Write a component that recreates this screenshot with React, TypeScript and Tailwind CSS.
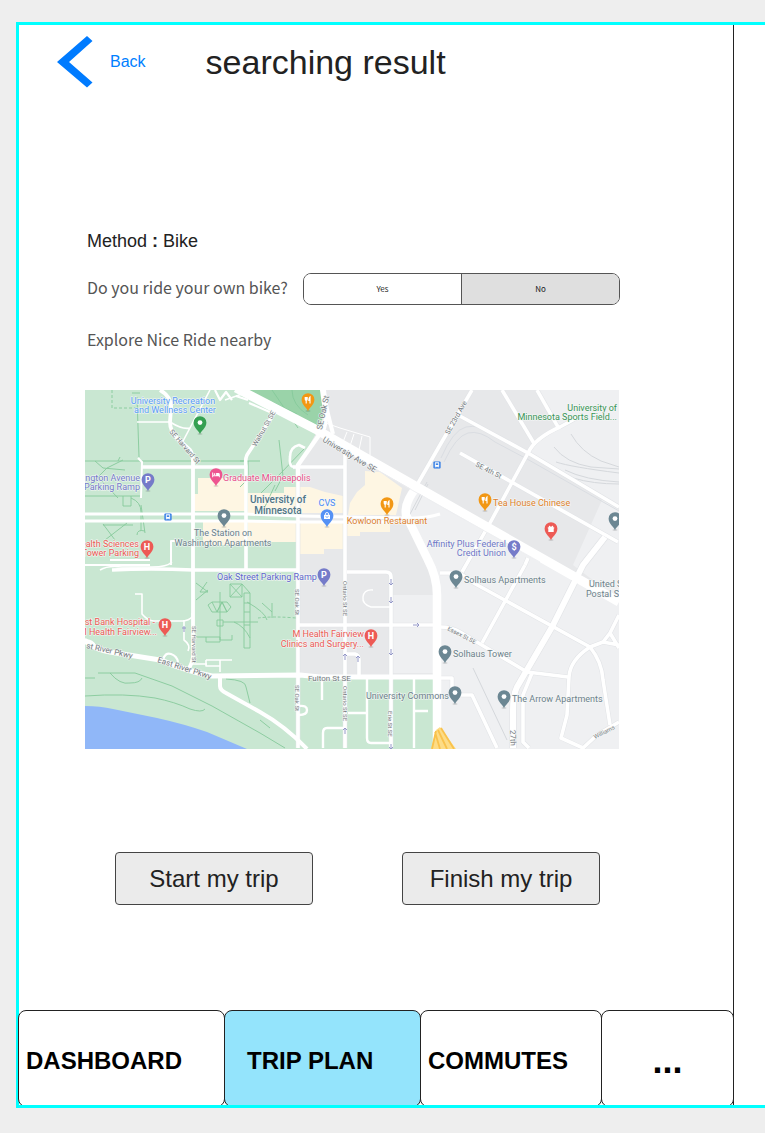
import React, { useState } from "react";

type LabelProps = {
  x: number;
  y: number;
  color: string;
  anchor?: "start" | "middle" | "end";
  size?: number;
  rotate?: number;
  weight?: number;
  halo?: string;
  children: string;
};

function Label({ x, y, color, anchor = "start", size = 9, rotate = 0, weight = 400, halo = "#f6f8f7", children }: LabelProps) {
  return (
    <text
      x={x}
      y={y}
      fill={color}
      fontSize={size}
      fontWeight={weight}
      textAnchor={anchor}
      stroke={halo}
      strokeWidth={1.4}
      strokeOpacity={0.75}
      strokeLinejoin="round"
      paintOrder="stroke"
      transform={rotate ? `rotate(${rotate} ${x} ${y})` : undefined}
    >
      {children}
    </text>
  );
}

type PinKind = "dot" | "letter" | "food" | "bag" | "bed" | "gift";

function Pin({ x, y, color, kind = "dot", letter }: { x: number; y: number; color: string; kind?: PinKind; letter?: string }) {
  return (
    <g transform={`translate(${x} ${y})`}>
      <ellipse cx="0" cy="11" rx="2.6" ry="1" fill="#000" opacity="0.12" />
      <path d="M0 11.3C-.9 7.6-6.4 5.6-6.4-.4a6.4 6.4 0 1 1 12.8 0C6.4 5.6 .9 7.6 0 11.3Z" fill={color} />
      {kind === "dot" && <circle cy="-.4" r="2.4" fill="#fff" />}
      {kind === "letter" && (
        <text y="3" fill="#fff" fontSize="9" fontWeight="700" textAnchor="middle">
          {letter}
        </text>
      )}
      {kind === "food" && (
        <path d="M-2.8-3v2.2q0 1 1 1.2V3.4M-.8-3v2.2q0 1-1 1.2M-1.8-3v3M2 3.4V-3Q.8-2 .8.4H2" fill="none" stroke="#fff" strokeWidth="1.1" />
      )}
      {kind === "bag" && (
        <>
          <path d="M-3-1.2h6v4.2h-6z" fill="#fff" />
          <path d="M-1.6-1v-1q0-1.5 1.6-1.5t1.6 1.5v1" fill="none" stroke="#fff" strokeWidth="0.9" />
          <path d="M-1.5.4q1.5 2 3 0" fill="none" stroke={color} strokeWidth="0.8" />
        </>
      )}
      {kind === "bed" && (
        <path d="M-3.8-2.4h.9v2.7h3v-2.2H2.4q1.4 0 1.4 1.4v2.8h-.9V1.2h-5.8v1.1h-.9zM-1.5-1.8a.9.9 0 1 1 0 1.8.9.9 0 0 1 0-1.8" fill="#fff" />
      )}
      {kind === "gift" && <path d="M-3.2-1.8h1.4L-2.4-3l1.2-.3L0-2l1.2-1.3L2.4-3l-.6 1.2h1.4V-.4h-.5v3.5h-5.4V-.4h-.5z" fill="#fff" />}
    </g>
  );
}

function Transit({ x, y }: { x: number; y: number }) {
  return (
    <g transform={`translate(${x} ${y})`}>
      <rect x="-3.6" y="-3.6" width="7.2" height="7.2" rx="1" fill="#2b78e4" />
      <path d="M-1.9-2.4h3.8v4.2h-3.8zM-1.4 1.8l-.6.9M1.4 1.8l.6.9" fill="#fff" stroke="#fff" strokeWidth="0.5" />
      <path d="M-1.2-1.6h2.4v1.5h-2.4z" fill="#2b78e4" />
    </g>
  );
}

const streets = [
  "M472 390L440 445 417 485",
  "M502 390L535 445",
  "M537 390L558 427",
  "M458 415L528 453 619 507",
  "M582 415L560 427Q535 438 528 453L490 523 462 572",
  "M460 453L618 542",
  "M525 565L482 643",
  "M528 558L525 565",
  "M440 573H458Q464 575 470 581L590 647",
  "M440 627Q452 627 460 632L527 672 568 677",
  "M590 647Q570 660 569 677L567 715 561 738 583 748 597 735 619 722",
  "M590 647Q602 662 603 680L610 725",
  "M590 647L603 642 610 633 619 615M603 642L619 645M610 633L619 648",
  "M298 465V748",
  "M345 452V748",
  "M293 467H345",
  "M298 625H433",
  "M347 572H386Q391 572 391 577V748",
  "M345 654H355Q359 655 359 660V675",
  "M532 673L523 695V742L529 748",
  "M440 678H452V695H472L497 748",
];

const greenPaths = [
  "M132 393h8M137 397l2 60",
  "M85 461H260M85 496H141M118 461l2-4M95 461l8 7 22 2M85 490l22-22 16-8M98 477l20 21",
  "M123 496v10h8v-10M131 498q10 4 10 14v19M103 524l12 16M103 525h30M105 540l22-17M145 531q-8-2-8 4M141 505l4 28",
  "M85 678h10M98 673h37l37 13 40 20 48 27 25 15M110 673q10 12 20 10 10 0 12-5",
  "M85 696q40-3 70 2 20 4 35 11 12 4 15 0M226 679q20 1 20 8l4 16",
  "M196 583l12 9h-8l7-10M196 600l12-10M208 605l4-3h15l4 5-4 5h-15zM212 602l5 10 5-10 5 10M217 612l5-10 5 10M220 592v48M206 637h14v5h-14zM196 637h10M220 640h12v-5M217 620h6v6h-6zM223 622h35",
  "M230 584h12v13h-12zM230 584l12 13M242 584l-12 13M242 584l8 9M244 593h6v55h-6zM244 603h6M244 612h6M244 625h6M234 622q10 4 16 16M247 602q18 10 20 18",
  "M272 390l26 38M292 390q0 15 16 25M272 402l25 12M305 448l-26 27-18 18M279 440l4 36-8 15M275 485l-12 26M240 461h8v18l-8 8",
  "M262 603l10 9v-9M272 612v6M260 720l10 8",
];

const lanes = [
  { d: "M137 422H170Q183 430 190 428M210 390L182 443M242 394L225 400M100 570q8-5 22-3h30q15 0 20-5", w: 1.6 },
  { d: "M135 594h7v20q6 7 12 7h30M184 621q10-2 8-8M184 620v20q7 5 4 11M192 664h15M206 660h26M206 660v6h14v-6M220 660v12", w: 1.6 },
  { d: "M163 660q2-8 8-6t7 8M85 640q8 0 10 6M236 396L248 400M249 403L272 413M215 390l5 10 6-8 6 8", w: 2.2 },
  { d: "M138 458l4 4-1 36M85 565h65M171 565v-24h8M110 560h40", w: 2 },
  { d: "M322 678v22M367 678v60q0 5 4 5h20M348 713h19M345 728h-18q-4 0-4 5v15M414 678v70M414 711h14M299 715q8 0 8-5t-8-4", w: 2.4 },
  { d: "M391 607h-20q-9-3-8-10 1-8 10-7", w: 1.4 },
  { d: "M320 421l20 7 30 9v18M347 432l-4 10M354 434l-4 12M362 436l-3 14", w: 1 },
];

const streetName = "#74797e";

function CampusMap() {
  return (
    <svg viewBox="85 390 534 359" className="block w-full" role="img" aria-label="Map of Nice Ride stations nearby" fontFamily="Roboto, sans-serif">
      <rect x="85" y="390" width="534" height="359" fill="#e7e8ea" />
      <path d="M85 390H236L318 430 298 466V677H437V749H85Z" fill="#c9e7d2" />
      <path d="M247 390H322Q327 407 320 427Z" fill="#9ad3a9" />
      <path d="M298 466L318 430 345 446V515H298Z" fill="#e7e8ea" />
      <path d="M538 390L560 428 537 443 528 455 619 507V390ZM602 500L573 565 619 600V510ZM413 485L619 600V749H437V590L405 512ZM393 595H435V673H393Z" fill="#eff0f2" />
      <path d="M198 478H246V511H194V494H198ZM203 522H246V545H203ZM248 493H284V487H310L325 492 343 496V513H248ZM248 522H297V542H248ZM300 523H343V549H324V554H300ZM348 515L350 503 357 492 365 485V471L380 472 402 488 396 515ZM347 520H390V532H360V536H347Z" fill="#fef6e3" />
      <path d="M85 706Q100 706 113 709L157 718Q184 724 207 732L247 749H85Z" fill="#90b7f8" />

      <g fill="none" stroke="#86c99b" strokeWidth="0.9">
        {greenPaths.map((d) => (
          <path key={d} d={d} />
        ))}
        <path d="M112 390v18h26M258 618q15-2 38 0" strokeDasharray="3 2" />
      </g>

      <g fill="none" stroke="#d5d8dc" strokeWidth="1">
        <path d="M554 447q12 16 37 20l28 2M571 434q10 18 30 27l18 6M556 462q15 5 63 11M565 470q20 10 54 12M573 478q20 6 46 6" />
        <path d="M441 458q12-28 25-31t28 7l30 16 95 56M444 462q12-26 24-29t27 9l32 17 92 52" stroke="#dadde2" />
        <path d="M473 668L507 740M427 482l-18 34M428 484l-13 26" />
      </g>

      <g fill="none" stroke="#e1e3e6" strokeWidth="4.6" strokeLinejoin="round">
        {streets.map((d) => (
          <path key={d} d={d} />
        ))}
        <path d="M605 537L583 565 552 627 517 687Q513 695 513 710V748" strokeWidth="7.2" />
      </g>

      <g fill="none" stroke="#fff" strokeLinejoin="round">
        {lanes.map((road) => (
          <path key={road.d} d={road.d} strokeWidth={road.w} />
        ))}
        <g strokeWidth="3.6">
          {streets.map((d) => (
            <path key={d} d={d} />
          ))}
        </g>
        <path d="M85 514H245L300 516 405 518Q425 519 440 514M85 521H245L300 522 405 522" strokeWidth="3" />
        <path d="M160 390Q172 397 171 408L170 422Q170 432 178 439L190 450Q193 454 193 462V655Q193 662 188 670" strokeWidth="3.8" />
        <path d="M142 467H245M193 467H245M275 412L247 455Q245 459 246 466V570" strokeWidth="3.6" />
        <path d="M112 570Q150 568 193 570H298" strokeWidth="3.4" />
        <path d="M305 448L299 445Q290 447 290 457 289 466 293 467" strokeWidth="2.6" />
        <path d="M322 388Q323 402 327 415L324 428 298 465V480" strokeWidth="4.4" />
        <path d="M324 390Q325 402 328 414L333 434" strokeWidth="4" />
        <path d="M84 640Q94 649 110 652L160 660Q190 672 212 676L300 675 320 677H437" strokeWidth="5.2" />
        <path d="M220 675V686Q220 690 226 693L260 712Q285 726 307 749" strokeWidth="4" />
        <path d="M236 388L317 430 417 487 619 602" strokeWidth="9" />
        <path d="M417 487Q404 502 406 515L428 560Q437 577 437 595V749" strokeWidth="8.5" />
        <path d="M605 537L583 565 552 627 517 687Q513 695 513 710V748" strokeWidth="6" />
      </g>
      <path d="M340 449L440 506 540 562" fill="none" stroke="#eceef0" strokeWidth="0.8" />

      <path d="M431 749L436 730 440 727 456 749Z" fill="#fddc86" />
      <path d="M432 749L436 731M440 749L435 732M441 728L454 749M438 730L447 749" fill="none" stroke="#f9c24c" strokeWidth="1.8" />

      <g fill="none" stroke="#9498c8" strokeWidth="1">
        <path d="M391 579v6m-2-2l2 2 2-2M391 597v6m-2-2l2 2 2-2M391 649v6m-2-2l2 2 2-2M391 744v5m-2-2l2 2 2-2M413 625h6m-2-2l2 2-2 2M345 660v-6m-2 2l2-2 2 2M358 662v-6m-2 2l2-2 2 2M345 734v-6m-2 2l2-2 2 2M184 626v6m-2-4h4" />
      </g>

      <g>
        <Label x={322} y={430} rotate={-78} size={8} color={streetName}>SE Oak St</Label>
        <Label x={322} y={441} rotate={31} size={8} color={streetName}>University Ave SE</Label>
        <Label x={169} y={432} rotate={49} size={7} color={streetName}>SE Harvard St</Label>
        <Label x={256} y={447} rotate={-60} size={7} color={streetName}>Walnut St SE</Label>
        <Label x={449} y={435} rotate={-61} size={7} color={streetName}>SE 23rd Ave</Label>
        <Label x={475} y={466} rotate={27} size={7} color={streetName}>SE 4th St</Label>
        <Label x={295} y={589} rotate={90} size={6} color={streetName}>SE Oak St</Label>
        <Label x={343} y={581} rotate={90} size={6} color={streetName}>Ontario St SE</Label>
        <Label x={295} y={685} rotate={90} size={6} color={streetName}>SE Oak St</Label>
        <Label x={343} y={686} rotate={90} size={6} color={streetName}>Ontario St SE</Label>
        <Label x={388} y={711} rotate={90} size={6} color={streetName}>Erie St SE</Label>
        <Label x={192} y={626} rotate={90} size={6} color={streetName}>SE Harvard St</Label>
        <Label x={447} y={630} rotate={27} size={6} color={streetName}>Essex St SE</Label>
        <Label x={510} y={730} rotate={88} size={8} color={streetName}>27th</Label>
        <Label x={595} y={739} rotate={-27} size={6} color={streetName}>Williams</Label>
        <Label x={86} y={648} rotate={13} size={8} color={streetName}>st River Pkwy</Label>
        <Label x={157} y={662} rotate={18} size={8} color={streetName}>East River Pkwy</Label>
        <Label x={308} y={681} size={8} color={streetName}>Fulton St SE</Label>
      </g>

      <Transit x={168} y={517} />
      <Transit x={437} y={465} />

      <Pin x={200} y={423} color="#35a052" />
      <Pin x={308} y={400} color="#f29714" kind="food" />
      <Pin x={148} y={480} color="#757bc9" kind="letter" letter="P" />
      <Pin x={216} y={475} color="#ee5590" kind="bed" />
      <Pin x={224} y={516} color="#6c8793" />
      <Pin x={327} y={516} color="#5491f5" kind="bag" />
      <Pin x={387} y={504} color="#f29714" kind="food" />
      <Pin x={485} y={500} color="#f29714" kind="food" />
      <Pin x={551} y={529} color="#ed5a55" kind="gift" />
      <Pin x={615} y={519} color="#6c8793" />
      <Pin x={514} y={547} color="#757bc9" kind="letter" letter="$" />
      <Pin x={147} y={547} color="#ed5a55" kind="letter" letter="H" />
      <Pin x={165} y={625} color="#ed5a55" kind="letter" letter="H" />
      <Pin x={371} y={636} color="#ed5a55" kind="letter" letter="H" />
      <Pin x={324} y={575} color="#757bc9" kind="letter" letter="P" />
      <Pin x={456} y={577} color="#6c8793" />
      <Pin x={445} y={652} color="#6c8793" />
      <Pin x={455} y={693} color="#6c8793" />
      <Pin x={504} y={697} color="#6c8793" />

      <Label x={173} y={404} anchor="middle" color="#5a9cf8">University Recreation</Label>
      <Label x={175} y={413} anchor="middle" color="#5a9cf8">and Wellness Center</Label>
      <Label x={140} y={481} anchor="end" color="#757bc9">ington Avenue</Label>
      <Label x={140} y={490} anchor="end" color="#757bc9">Parking Ramp</Label>
      <Label x={223} y={481} color="#e9508a">Graduate Minneapolis</Label>
      <Label x={278} y={503} anchor="middle" size={10} weight={500} color="#4f7585">University of</Label>
      <Label x={278} y={514} anchor="middle" size={10} weight={500} color="#4f7585">Minnesota</Label>
      <Label x={327} y={506} anchor="middle" color="#4a8af4">CVS</Label>
      <Label x={387} y={524} anchor="middle" color="#e0812b">Kowloon Restaurant</Label>
      <Label x={493} y={506} color="#e0812b">Tea House Chinese</Label>
      <Label x={617} y={411} anchor="end" color="#389455">University of</Label>
      <Label x={617} y={420} anchor="end" color="#389455">Minnesota Sports Field...</Label>
      <Label x={223} y={536} anchor="middle" color="#6c818b">The Station on</Label>
      <Label x={223} y={546} anchor="middle" color="#6c818b">Washington Apartments</Label>
      <Label x={139} y={547} anchor="end" color="#ed5a55">ealth Sciences</Label>
      <Label x={139} y={556} anchor="end" color="#ed5a55">Tower Parking</Label>
      <Label x={506} y={547} anchor="end" color="#6f76c8">Affinity Plus Federal</Label>
      <Label x={506} y={556} anchor="end" color="#6f76c8">Credit Union</Label>
      <Label x={217} y={580} color="#6067cc">Oak Street Parking Ramp</Label>
      <Label x={464} y={583} color="#6c818b">Solhaus Apartments</Label>
      <Label x={589} y={587} color="#6c818b">United S</Label>
      <Label x={586} y={597} color="#6c818b">Postal S</Label>
      <Label x={155} y={625} anchor="end" color="#ed5a55">st Bank Hospital -</Label>
      <Label x={157} y={635} anchor="end" color="#ed5a55">M Health Fairview...</Label>
      <Label x={364} y={637} anchor="end" color="#ed5a55">M Health Fairview</Label>
      <Label x={364} y={647} anchor="end" color="#ed5a55">Clinics and Surgery...</Label>
      <Label x={453} y={657} color="#6c818b">Solhaus Tower</Label>
      <Label x={366} y={699} color="#6c818b">University Commons</Label>
      <Label x={512} y={702} color="#6c818b">The Arrow Apartments</Label>
    </svg>
  );
}

const tabs = [
  { name: "DASHBOARD", className: "justify-start pl-[7px] text-2xl" },
  { name: "TRIP PLAN", className: "justify-start pl-[22px] text-2xl" },
  { name: "COMMUTES", className: "justify-start pl-[7px] text-2xl" },
  { name: "...", className: "justify-center text-4xl" },
];

export default function App() {
  const [ownBike, setOwnBike] = useState(false);
  const [active, setActive] = useState("TRIP PLAN");

  return (
    <div className="flex min-h-screen flex-col bg-[#eeeeee] pt-[22px] pb-[25px] pl-4 font-['Liberation_Sans',Arial,sans-serif] text-[#222222]">
      <div className="flex grow border-y-[3px] border-l-[3px] border-[#00ffff] bg-white">
        <div className="mr-[31px] flex min-w-0 flex-1 flex-col border-r border-[#222222]">
          <header className="flex items-center pt-[10px] pl-[38px]">
            <a href="#back" className="flex items-center gap-[17px] pt-px text-base text-[#0080ff]">
              <svg width="36" height="52" viewBox="0 0 36 52" aria-hidden="true">
                <path d="M30 0 0 26 30 51.5 35.5 46.5 12 26 35.5 5Z" fill="#007bff" />
              </svg>
              Back
            </a>
            <h1 className="ml-[60px] text-[34px] leading-[52px]">searching result</h1>
          </header>

          <main className="flex grow flex-col pr-[114px] pl-[66px]">
            <p className="mt-[141px] ml-[2px] text-lg leading-6">
              Method <b>:</b> Bike
            </p>

            <div className="mt-5 flex items-center justify-between font-['Noto_Sans_CJK_SC',sans-serif] text-[#555555]">
              <p id="own-bike" className="ml-[2px] pb-1 text-base leading-6">
                Do you ride your own bike?
              </p>
              <div role="group" aria-labelledby="own-bike" className="-mr-px flex h-8 w-[317px] overflow-hidden rounded-lg border border-[#555555] text-[8px] text-[#222222]">
                <button type="button" aria-pressed={ownBike} onClick={() => setOwnBike(true)} className={`flex-1 border-r border-[#555555] ${ownBike ? "bg-[#dfdfdf]" : "bg-white"}`}>
                  Yes
                </button>
                <button type="button" aria-pressed={!ownBike} onClick={() => setOwnBike(false)} className={`flex-1 ${ownBike ? "bg-white" : "bg-[#dfdfdf]"}`}>
                  No
                </button>
              </div>
            </div>

            <h2 className="mt-[22px] ml-[2px] font-['Noto_Sans_CJK_SC',sans-serif] text-base leading-6 text-[#555555]">Explore Nice Ride nearby</h2>

            <div className="mt-[39px]">
              <CampusMap />
            </div>

            <div className="mt-[103px] flex justify-between pr-[19px] pl-[30px]">
              <button type="button" className="h-[53px] w-[198px] rounded border border-[#444444] bg-[#ebebeb] text-2xl">
                Start my trip
              </button>
              <button type="button" className="h-[53px] w-[198px] rounded border border-[#444444] bg-[#ebebeb] text-2xl">
                Finish my trip
              </button>
            </div>
          </main>

          <nav className="-mr-px -ml-px grid h-[95px] grid-cols-[206fr_196fr_181fr_133fr] overflow-hidden">
            {tabs.map((tab) => (
              <button
                key={tab.name}
                type="button"
                aria-current={active === tab.name ? "page" : undefined}
                onClick={() => setActive(tab.name)}
                className={`-mr-px flex h-[97px] items-center rounded-lg border border-[#222222] pt-1 font-bold text-black last:mr-0 ${tab.className} ${
                  active === tab.name ? "bg-[#94e4fc]" : "bg-white"
                }`}
              >
                {tab.name}
              </button>
            ))}
          </nav>
        </div>
      </div>
    </div>
  );
}
